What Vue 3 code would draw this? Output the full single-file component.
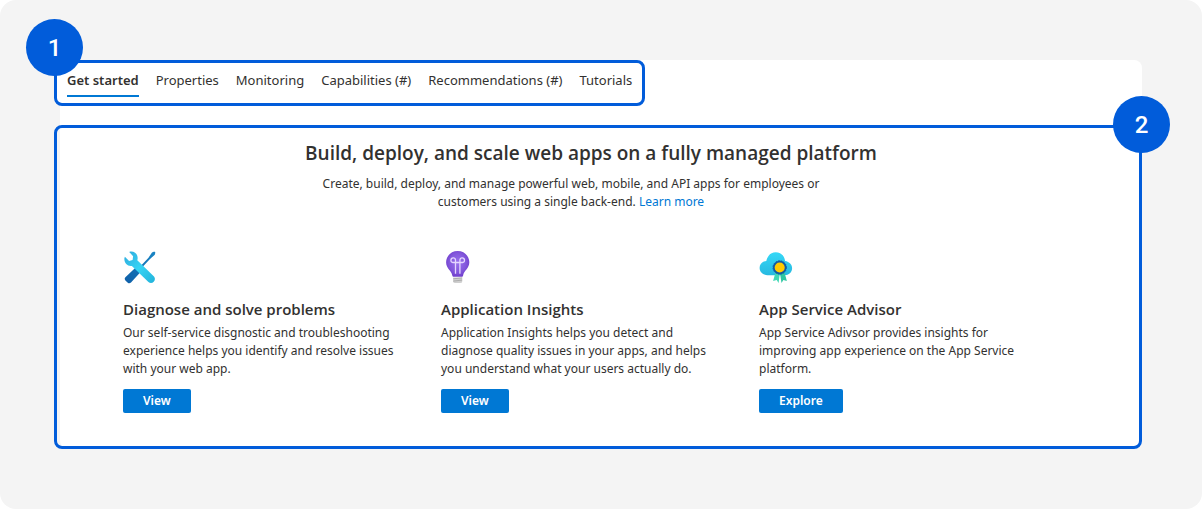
<script setup>
const tabs = ['Get started', 'Properties', 'Monitoring', 'Capabilities (#)', 'Recommendations (#)', 'Tutorials']

const cards = [
  {
    icon: 'tools',
    title: 'Diagnose and solve problems',
    text: 'Our self-service disgnostic and troubleshooting\nexperience helps you identify and resolve issues\nwith your web app.',
    action: 'View',
  },
  {
    icon: 'bulb',
    title: 'Application Insights',
    text: 'Application Insights helps you detect and\ndiagnose quality issues in your apps, and helps\nyou understand what your users actually do.',
    action: 'View',
  },
  {
    icon: 'cloud',
    title: 'App Service Advisor',
    text: 'App Service Adivsor provides insights for\nimproving app experience on the App Service\nplatform.',
    action: 'Explore',
  },
]
</script>

<template>
  <div class="page">
    <main class="panel">
      <nav class="frame tabs" aria-label="Overview sections">
        <span class="badge badge-left">1</span>
        <a
          v-for="(tab, i) in tabs"
          :key="tab"
          href="#"
          class="tab"
          :class="{ active: i === 0 }"
          :aria-current="i === 0 ? 'page' : undefined"
        >{{ tab }}</a>
      </nav>

      <section class="frame content">
        <span class="badge badge-right">2</span>
        <header class="intro">
          <h1>Build, deploy, and scale web apps on a fully managed platform</h1>
          <p>
            Create, build, deploy, and manage powerful web, mobile, and API apps for employees or<br />
            customers using a single back-end. <a href="#">Learn more</a>
          </p>
        </header>

        <div class="cards">
          <article v-for="card in cards" :key="card.title" class="card">
            <svg v-if="card.icon === 'tools'" class="icon" viewBox="0 0 36 36" aria-hidden="true">
              <defs>
                <linearGradient id="driver" x1="1" y1="0" x2="0" y2="1">
                  <stop offset="0" stop-color="#1a86c4" />
                  <stop offset="1" stop-color="#0f5fa8" />
                </linearGradient>
                <linearGradient id="wrench" x1="0" y1="0" x2="1" y2="1">
                  <stop offset="0" stop-color="#2fa9dc" />
                  <stop offset="0.5" stop-color="#36d4f5" />
                  <stop offset="1" stop-color="#22b2da" />
                </linearGradient>
              </defs>
              <path d="M31.200 2.500 29 3.500 25.500 8.700 15.500 19.200l-2.300-1.300L2.400 28.200q-1.400 1.600 0 3.200l2.400 2.300q1.600 1.300 3.200-.2L18.500 22l-1.600-1.300L27 10.100l4.800-4.300.6-2.300z" fill="url(#driver)" />
              <path d="M6.200 2.900c4.300-1.400 9 1.800 8.400 7l-.3 1.300 16.700 16.400c3 3.600-2.100 8.600-5.600 5.300L8.900 16.900C5 17.800.9 14.300 1.400 9.200l.5-1.500 4.200 4.200 3.500-.9.500-3.800z" fill="url(#wrench)" />
            </svg>

            <svg v-else-if="card.icon === 'bulb'" class="icon" viewBox="0 0 36 36" aria-hidden="true">
              <defs>
                <radialGradient id="glass" cx=".5" cy=".45" r=".6">
                  <stop offset="0" stop-color="#9a72ee" />
                  <stop offset="0.6" stop-color="#8358dc" />
                  <stop offset="1" stop-color="#6b38c8" />
                </radialGradient>
              </defs>
              <path d="M16.700 2.100c-6.700 0-11.600 5-11.600 11.200 0 6.500 5.500 8.200 6.200 13.300.1 1 .7 1.200 1.400 1.200h8c.7 0 1.300-.2 1.400-1.200.7-5.100 6.200-6.800 6.200-13.300 0-6.200-4.900-11.200-11.600-11.200z" fill="url(#glass)" />
              <path d="M14.500 24.800V13.500H11.900a2.300 2.300 0 1 1 2.600-2.500v2.500h4.400v-2.500a2.300 2.300 0 1 1 2.600 2.500h-2.600V24.800" fill="none" stroke="#e5d7ff" stroke-width="1.300" />
              <path d="M12.200 28.400h9v4.300q0 1.400-2.300 1.400h-4.400q-2.300 0-2.300-1.400z" fill="#cfcfcf" />
              <path d="M12.200 29.800l9-.9M12.200 32.100l9-1" stroke="#a3a3a3" stroke-width=".8" />
            </svg>

            <svg v-else class="icon" viewBox="0 0 36 36" aria-hidden="true">
              <defs>
                <linearGradient id="sky" x1="0" y1="0" x2="0" y2="1">
                  <stop offset="0" stop-color="#36d8f7" />
                  <stop offset="1" stop-color="#27b9e0" />
                </linearGradient>
              </defs>
              <path d="M8.500 26.200C3.400 26.200.6 22.800.6 19.100c0-3.800 2.700-6.700 6.700-7C8.500 6.600 12 3.300 16.700 3.300c5.200 0 8.900 3.600 9.400 8.800 4.300.7 7 3.600 7 7.100 0 4-3.200 7-7.500 7z" fill="url(#sky)" />
              <path d="M16.800 22.500 14.100 31.900l3.600-.8 1.900 3 1.200-9.600z" fill="#40d8b5" />
              <path d="M25.200 22.500l2.700 9.400-3.500-.8-1.900 3-1.500-9.600z" fill="#2ec7a2" />
              <circle cx="20.700" cy="18.500" r="5.900" fill="#ffca00" stroke="#105aa4" stroke-width="1.700" />
              <circle cx="20.700" cy="18.500" r="6.700" fill="none" stroke="#105aa4" stroke-width="1" stroke-dasharray="1.700 1" />
            </svg>

            <h2>{{ card.title }}</h2>
            <p>{{ card.text }}</p>
            <button type="button">{{ card.action }}</button>
          </article>
        </div>
      </section>
    </main>
  </div>
</template>

<style>
body {
  margin: 0;
  background: #fff;
}
</style>

<style scoped>
.page {
  box-sizing: border-box;
  min-height: 100vh;
  padding: 60px;
  border-radius: 16px;
  background: #f4f4f4;
  color: #323130;
  font-family: "Noto Sans", "Open Sans", sans-serif;
  font-size: 12px;
  line-height: 18px;
}

.panel {
  border-radius: 8px;
  background: #fff;
}

.frame {
  position: relative;
  box-sizing: border-box;
  margin-left: -6px;
  border: 3px solid #015cda;
  border-radius: 8px;
}

.tabs {
  display: flex;
  gap: 17px;
  width: fit-content;
  height: 46px;
  padding: 7px 10px 0;
  background: #fff;
}

.tab {
  height: 25px;
  border-bottom: 2px solid transparent;
  color: inherit;
  font-size: 13px;
  line-height: 20px;
  text-decoration: none;
  white-space: nowrap;
}

.tab.active {
  border-color: #0078d4;
  font-weight: 600;
}

.badge {
  position: absolute;
  z-index: 1;
  display: grid;
  place-items: center;
  width: 57px;
  height: 57px;
  border-radius: 50%;
  background: #015cda;
  color: #fff;
  font-family: Roboto, sans-serif;
  font-size: 24px;
  font-weight: 500;
}

.badge-left {
  top: -44px;
  left: -31px;
}

.badge-right {
  top: -32px;
  right: -31px;
}

.content {
  margin-top: 19px;
  padding: 11px 66px 33px;
}

.intro {
  text-align: center;
}

.intro h1 {
  margin: 0 14px 8px 0;
  font-family: "Open Sans", sans-serif;
  font-size: 19px;
  font-weight: 600;
  line-height: 28px;
}

.intro p {
  margin: 0 54px 0 0;
}

.intro a {
  color: #0078d4;
  text-decoration: none;
}

.cards {
  display: grid;
  grid-template-columns: repeat(3, minmax(0, 300px));
  gap: 18px;
  margin-top: 38px;
}

.icon {
  display: block;
  width: 36px;
  height: 36px;
}

.card h2 {
  margin: 12px 0 3px;
  font-family: "Open Sans", sans-serif;
  font-size: 15px;
  font-weight: 600;
  line-height: 24px;
}

.card p {
  margin: 0 0 11px;
  white-space: pre-line;
}

.card button {
  display: block;
  height: 24px;
  padding: 0 20px;
  border: 0;
  border-radius: 2px;
  background: #0078d4;
  color: #fff;
  font: inherit;
  font-weight: 600;
}
</style>
